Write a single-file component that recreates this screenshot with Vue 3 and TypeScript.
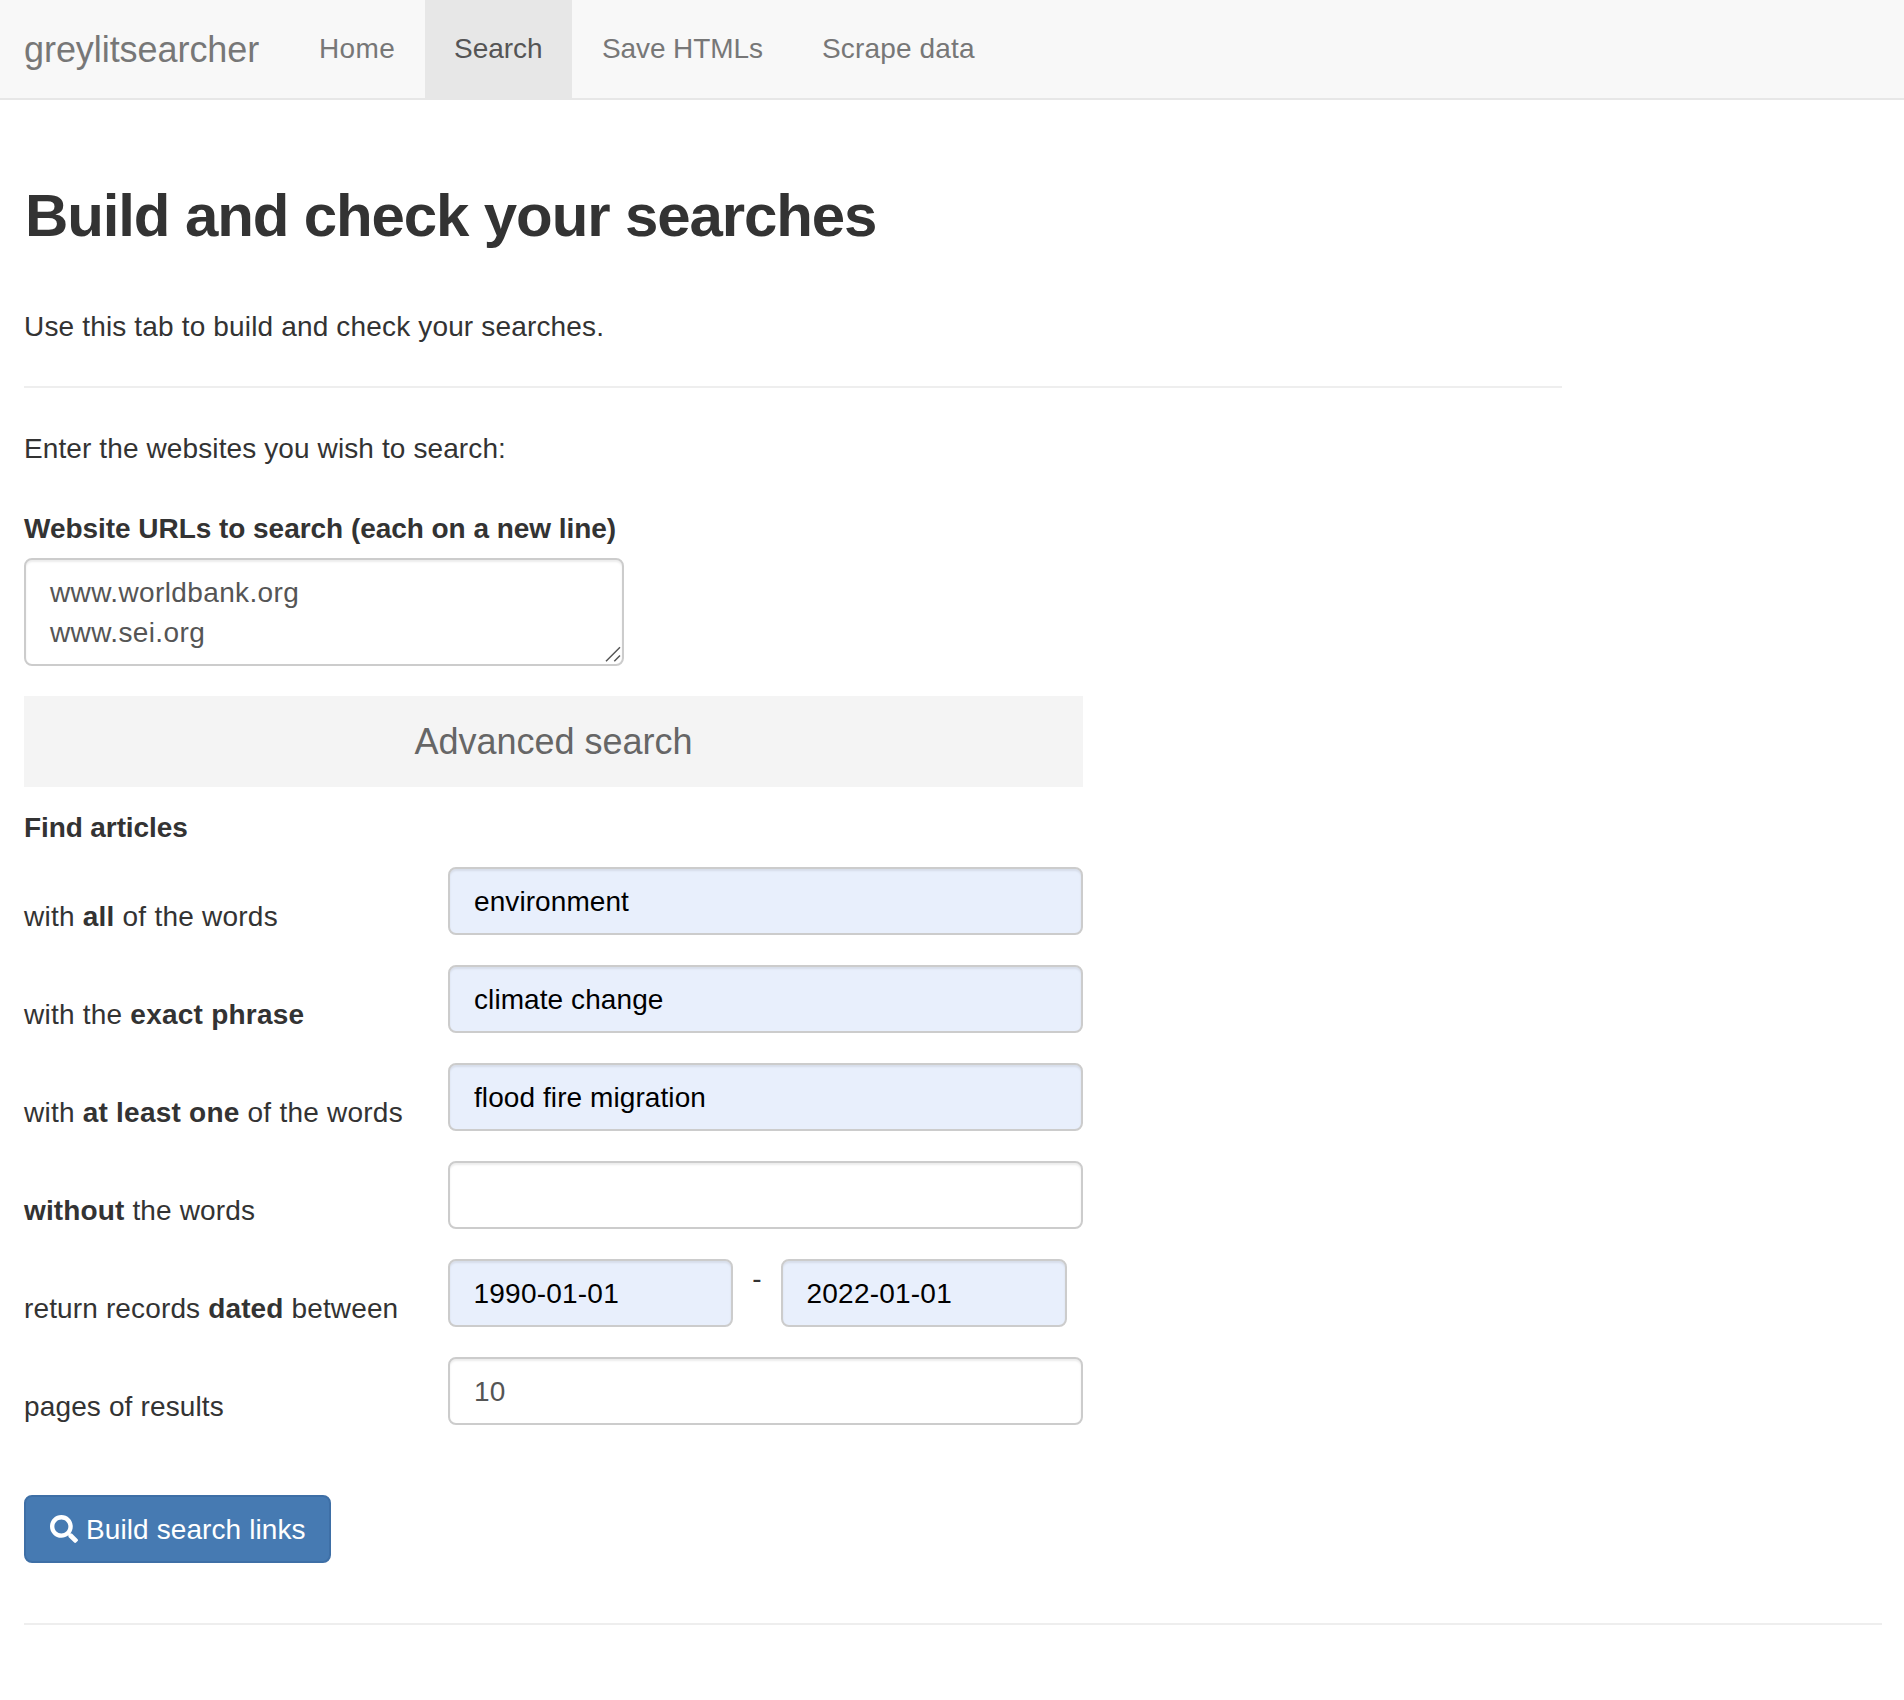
<script setup lang="ts">
import { ref } from 'vue'

interface Tab { id: string; label: string }
interface Part { text: string; bold?: boolean }
interface Field { label: Part[]; values: string[]; filled: boolean }

const tabs: Tab[] = [
  { id: 'home', label: 'Home' },
  { id: 'search', label: 'Search' },
  { id: 'save', label: 'Save HTMLs' },
  { id: 'scrape', label: 'Scrape data' },
]
const active = ref('search')
const urls = ref('www.worldbank.org\nwww.sei.org')

const fields = ref<Field[]>([
  { label: [{ text: 'with ' }, { text: 'all', bold: true }, { text: ' of the words' }], values: ['environment'], filled: true },
  { label: [{ text: 'with the ' }, { text: 'exact phrase', bold: true }], values: ['climate change'], filled: true },
  { label: [{ text: 'with ' }, { text: 'at least one', bold: true }, { text: ' of the words' }], values: ['flood fire migration'], filled: true },
  { label: [{ text: 'without', bold: true }, { text: ' the words' }], values: [''], filled: false },
  { label: [{ text: 'return records ' }, { text: 'dated', bold: true }, { text: ' between' }], values: ['1990-01-01', '2022-01-01'], filled: true },
  { label: [{ text: 'pages of results' }], values: ['10'], filled: false },
])
</script>

<template>
  <div class="page">
    <nav class="navbar">
      <span class="brand">greylitsearcher</span>
      <a
        v-for="tab in tabs"
        :key="tab.id"
        :class="['tab', tab.id, { active: tab.id === active }]"
        @click="active = tab.id"
      >{{ tab.label }}</a>
    </nav>

    <main class="content">
      <h2 class="title">Build and check your searches</h2>
      <p class="intro">Use this tab to build and check your searches.</p>
      <hr class="rule short" />
      <p class="prompt">Enter the websites you wish to search:</p>

      <label class="urls-label" for="urls">Website URLs to search (each on a new line)</label>
      <div class="urls">
        <textarea id="urls" v-model="urls" class="control area" spellcheck="false"></textarea>
        <svg class="grip" width="16" height="16" viewBox="0 0 16 16" aria-hidden="true">
          <path d="M1 15.2 15 1.2M9.3 15.2 15 9.5" fill="none" stroke="#555" stroke-width="1.5" />
        </svg>
      </div>

      <div class="band">Advanced search</div>
      <p class="find">Find articles</p>

      <div class="fields">
        <div v-for="(field, i) in fields" :key="i" class="row">
          <div class="row-label">
            <template v-for="(part, j) in field.label" :key="j">
              <b v-if="part.bold">{{ part.text }}</b>
              <span v-else>{{ part.text }}</span>
            </template>
          </div>
          <div :class="['row-inputs', { pair: field.values.length > 1 }]">
            <template v-for="(_, k) in field.values" :key="k">
              <span v-if="k > 0" class="dash">-</span>
              <input v-model="field.values[k]" type="text" :class="['control', { filled: field.filled }]" />
            </template>
          </div>
        </div>
      </div>

      <button class="build" type="button">
        <svg class="search-icon" viewBox="0 0 512 512" aria-hidden="true">
          <path
            fill="currentColor"
            d="M505 442.700 405.300 343c-4.500-4.500-10.600-7-17-7H372c27.600-35.300 44-79.700 44-128C416 93.100 322.900 0 208 0S0 93.100 0 208s93.100 208 208 208c48.300 0 92.700-16.400 128-44v16.300c0 6.400 2.500 12.500 7 17l99.700 99.700c9.400 9.400 24.600 9.400 33.900 0l28.300-28.300c9.400-9.400 9.400-24.600.1-34zM208 336c-70.700 0-128-57.200-128-128 0-70.700 57.200-128 128-128 70.700 0 128 57.200 128 128 0 70.700-57.200 128-128 128z"
          />
        </svg>
        <span class="build-text">Build search links</span>
      </button>
      <hr class="rule" />
    </main>
  </div>
</template>

<style>
body {
  margin: 0;
  background: #fff;
}
</style>

<style scoped>
* {
  box-sizing: border-box;
}
.page {
  min-height: 1700px;
  font-family: "Liberation Sans", Arial, sans-serif;
  font-size: 28px;
  line-height: 40px;
  letter-spacing: 0.16px;
  color: #333;
}
.navbar {
  display: flex;
  height: 100px;
  padding-left: 24px;
  background: #f8f8f8;
  border-bottom: 2px solid #e7e7e7;
}
.brand {
  width: 264px;
  padding-top: 30px;
  font-size: 36px;
  letter-spacing: -0.06px;
  color: #777;
}
.tab {
  padding: 29px 0 0 30px;
  color: #777;
  white-space: nowrap;
  cursor: pointer;
}
.tab.active {
  color: #555;
  background: #e7e7e7;
}
.home {
  width: 137px;
  padding-left: 31px;
  letter-spacing: 0.4px;
}
.search {
  width: 147px;
  padding-left: 29px;
  letter-spacing: -0.05px;
}
.save {
  width: 220px;
  letter-spacing: -0.1px;
}
.content {
  padding: 83px 22px 0 24px;
}
.title {
  margin: 0 0 57px;
  padding-left: 1px;
  font-size: 60px;
  line-height: 66px;
  font-weight: 700;
  letter-spacing: -1.12px;
}
p {
  height: 40px;
  margin: 0;
  padding-top: 1px;
}
.prompt {
  letter-spacing: 0.11px;
}
.rule {
  height: 2px;
  margin: 60px 0 0;
  border: 0;
  background: #eee;
}
.rule.short {
  width: 1538px;
  margin: 40px 0;
}
.urls-label {
  display: block;
  margin: 40px 0 9px;
  padding-top: 1px;
  font-weight: 700;
  letter-spacing: -0.04px;
}
.urls {
  position: relative;
  width: 600px;
  height: 108px;
}
.control {
  display: block;
  width: 100%;
  height: 68px;
  margin: 0;
  padding: 13px 24px 11px;
  border: 2px solid #ccc;
  border-radius: 8px;
  outline: 0;
  background: #fff;
  box-shadow: inset 0 2px 2px rgba(0, 0, 0, 0.075);
  font: inherit;
  letter-spacing: 0.08px;
  color: #555;
}
.control.filled {
  background: #e8effc;
  color: #000;
}
.area {
  height: 108px;
  resize: none;
  overflow: hidden;
  letter-spacing: 0.38px;
}
.grip {
  position: absolute;
  right: 3px;
  bottom: 4px;
}
.band {
  width: 1059px;
  height: 91px;
  margin-top: 30px;
  padding-top: 26px;
  background: #f4f4f4;
  font-size: 36px;
  letter-spacing: 0;
  text-align: center;
  color: #666;
}
.find {
  margin: 20px 0;
  font-weight: 700;
  letter-spacing: -0.1px;
}
.fields {
  display: flex;
  flex-direction: column;
  gap: 30px;
}
.row {
  display: flex;
  height: 68px;
}
.row-label {
  display: flex;
  width: 424px;
  padding-top: 30px;
  letter-spacing: 0.23px;
  white-space: pre;
}
.row:nth-child(n + 4) .row-label {
  letter-spacing: 0.14px;
}
.row-inputs {
  display: flex;
  width: 635px;
}
.pair .control {
  width: 285px;
  padding-left: 23.500px;
  letter-spacing: 0.22px;
}
.pair .control:last-child {
  width: 286px;
}
.dash {
  width: 48px;
  text-align: center;
}
.build {
  display: flex;
  align-items: center;
  gap: 8px;
  width: 307px;
  height: 68px;
  margin-top: 70px;
  padding: 0 0 0 24px;
  border: 2px solid #3e6fa6;
  border-radius: 8px;
  background: #467ab2;
  font: inherit;
  letter-spacing: 0.1px;
  color: #fff;
  white-space: nowrap;
}
.build-text {
  padding-top: 2px;
}
.search-icon {
  width: 28px;
  height: 28px;
}
</style>
